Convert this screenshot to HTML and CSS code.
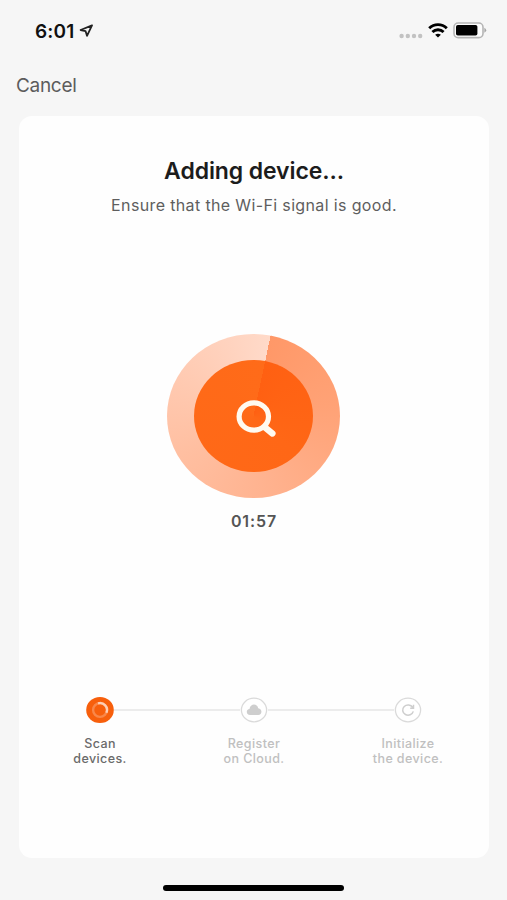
FILE: index.html
```html
<!DOCTYPE html>
<html lang="en">
    <head>
        <meta charset="utf-8">
        <title>Adding device</title>
        <link rel="stylesheet" href="styles.css">
    </head>
    <body>
        <div class="screen">
            <header class="status-bar">
                <div class="clock">
                    <span class="time">6:01</span>
                    <svg class="location" width="14" height="14" viewBox="0 0 14 14">
                        <path d="M13 1.4 1.6 6 6.6 7.2 8 11.8Z" fill="none" stroke="#222" stroke-width="1.8" stroke-linejoin="round"/>
                    </svg>
                </div>
                <div class="indicators">
                    <svg class="signal" width="24" height="6" viewBox="0 0 24 6" fill="#c2c2c2">
                        <circle cx="2.6" cy="3" r="2.2"/>
                        <circle cx="8.8" cy="3" r="2.2"/>
                        <circle cx="15" cy="3" r="2.2"/>
                        <circle cx="21.2" cy="3" r="2.2"/>
                    </svg>
                    <svg class="wifi" width="20" height="15" viewBox="0 0 20 15" fill="none" stroke="#000" stroke-width="2.9">
                        <path d="M1.2 5.2C6.2 .4 13.8 .4 18.8 5.2"/>
                        <path d="M4.4 9C7.6 6 12.4 6 15.6 9"/>
                        <path d="M10 14.6 7.1 11.8Q10 9.8 12.9 11.8Z" fill="#000" stroke="none"/>
                    </svg>
                    <svg class="battery" width="34" height="17" viewBox="0 0 34 17">
                        <rect x="1" y="1" width="29" height="14.6" rx="4.2" fill="#fcfcfc" stroke="#b5b5b5" stroke-width="1.6"/>
                        <rect x="3" y="3" width="21.4" height="10.6" rx="1.8" fill="#000"/>
                        <path d="M31.4 5.8Q35 8.3 31.4 10.8Z" fill="#a5a5a5"/>
                    </svg>
                </div>
            </header>
            <nav class="nav">
                <a class="cancel">Cancel</a>
            </nav>

            <main class="card">
                <h1 class="title">Adding device...</h1>
                <p class="hint">Ensure that the Wi-Fi signal is good.</p>

                <div class="radar">
                    <div class="core">
                        <svg width="42" height="40" viewBox="0 0 42 40" fill="none" stroke="#fffaf0">
                            <ellipse cx="17.8" cy="17.5" rx="14.7" ry="13.7" stroke-width="5.2"/>
                            <path d="M28.8 28.2 36.4 34.4" stroke-width="6.4" stroke-linecap="round"/>
                        </svg>
                    </div>
                </div>
                <p class="countdown">01:57</p>

                <ol class="steps">
                    <li class="step active">
                        <svg class="step-icon" width="28" height="28" viewBox="0 0 28 28" fill="none">
                            <ellipse cx="14" cy="14" rx="13.8" ry="13.1" fill="#f75f0c"/>
                            <circle cx="14" cy="14" r="6.9" stroke="#fff" stroke-opacity=".25" stroke-width="2.4"/>
                            <path d="M12 7.4A6.9 6.9 0 0 1 20.4 16.8" stroke="#fff" stroke-opacity=".6" stroke-width="2.4"/>
                        </svg>
                        <p class="label">Scan<br>devices.</p>
                    </li>
                    <li class="step">
                        <svg class="step-icon" width="28" height="28" viewBox="0 0 28 28" fill="none">
                            <ellipse cx="14" cy="14" rx="12.6" ry="11.8" fill="#fff" stroke="#dadada" stroke-width="1.3"/>
                            <path d="M10.1 18.9C5.8 18.9 5.8 13.4 9.5 13.1 10.1 7.2 17.2 6.9 18.2 12.2 22.7 12.8 22.3 18.9 18.2 18.9Z" fill="#cecece"/>
                        </svg>
                        <p class="label">Register<br>on Cloud.</p>
                    </li>
                    <li class="step">
                        <svg class="step-icon" width="28" height="28" viewBox="0 0 28 28" fill="none">
                            <ellipse cx="14" cy="14" rx="12.6" ry="11.8" fill="#fff" stroke="#dadada" stroke-width="1.3"/>
                            <path d="M18.7 11.4A5.4 5.1 0 1 0 19.3 15.4M19.5 8.8V12.2H16.2" stroke="#cecece" stroke-width="1.5"/>
                        </svg>
                        <p class="label">Initialize<br>the device.</p>
                    </li>
                </ol>
            </main>
            <div class="home-indicator"></div>
        </div>
    </body>
</html>
```

FILE: styles.css
```css
* {
    box-sizing: border-box;
    margin: 0;
    padding: 0;
}

body {
    background: #f6f6f6;
    font-family: Inter, "Liberation Sans", sans-serif;
}

.screen {
    display: flex;
    flex-direction: column;
    height: 900px;
    overflow: hidden;
}

.status-bar {
    display: flex;
    justify-content: space-between;
    align-items: center;
    height: 62px;
    padding: 0 20px 0 35px;
}

.clock,
.indicators {
    display: flex;
    align-items: center;
}

.clock {
    gap: 4px;
}

.time {
    font-size: 19px;
    font-weight: 600;
    letter-spacing: .2px;
    color: #111;
}

.signal {
    margin: 9px 5px 0 0;
}

.wifi {
    margin: 0 5px 2px 0;
}

.battery {
    margin-bottom: 1px;
}

.nav {
    height: 54px;
    padding: 12px 16px 0;
}

.cancel {
    font-size: 19px;
    line-height: 24px;
    letter-spacing: -.3px;
    color: #5c5c5c;
}

.card {
    display: flex;
    flex-direction: column;
    align-items: center;
    height: 742px;
    margin: 0 18px 0 19px;
    padding-top: 40px;
    border-radius: 13px;
    background: #fefefe;
    text-align: center;
}

.title {
    font-size: 23px;
    line-height: 30px;
    font-weight: 600;
    letter-spacing: -.1px;
    color: #1c1c1c;
}

.hint {
    margin-top: 9px;
    font-size: 16px;
    line-height: 20px;
    letter-spacing: .36px;
    color: #5e5e5e;
}

.radar {
    display: flex;
    justify-content: center;
    align-items: center;
    width: 173px;
    height: 164px;
    margin-top: 119px;
    margin-right: 1px;
    border-radius: 50%;
    background: conic-gradient(from 12deg, #ff9868, #ffa276 70deg, #ffb18d 150deg, #ffbfa1 230deg, #ffd3bf 330deg, #ffdac9);
}

.core {
    display: flex;
    justify-content: center;
    align-items: center;
    width: 119px;
    height: 112px;
    border-radius: 50%;
    background: conic-gradient(from 12deg, #ff6012, #ff6716 120deg, #ff6b19);
}

.core svg {
    margin: 5px 0 0 6px;
}

.countdown {
    margin-top: 13px;
    font-size: 16px;
    line-height: 20px;
    font-weight: 600;
    letter-spacing: .9px;
    color: #555;
}

.steps {
    display: flex;
    width: 462px;
    margin-top: 165px;
    list-style: none;
}

.step {
    display: grid;
    grid-template-columns: 1fr 28px 1fr;
    align-items: center;
    flex: 1;
}

.step::before,
.step::after {
    content: "";
    grid-row: 1;
    height: 2px;
    background: #ececec;
}

.step::before {
    grid-column: 1;
}

.step::after {
    grid-column: 3;
}

.step:first-child::before,
.step:last-child::after {
    background: none;
}

.step-icon {
    grid-area: 1 / 2;
}

.label {
    grid-area: 2 / 1 / 3 / 4;
    margin-top: 12px;
    font-size: 12.5px;
    line-height: 15px;
    font-weight: 500;
    letter-spacing: .4px;
    color: #c0c0c0;
}

.active .label {
    color: #6a6a6a;
}

.home-indicator {
    width: 181px;
    height: 6px;
    margin: 27px auto 0;
    border-radius: 3px;
    background: #000;
}
```
